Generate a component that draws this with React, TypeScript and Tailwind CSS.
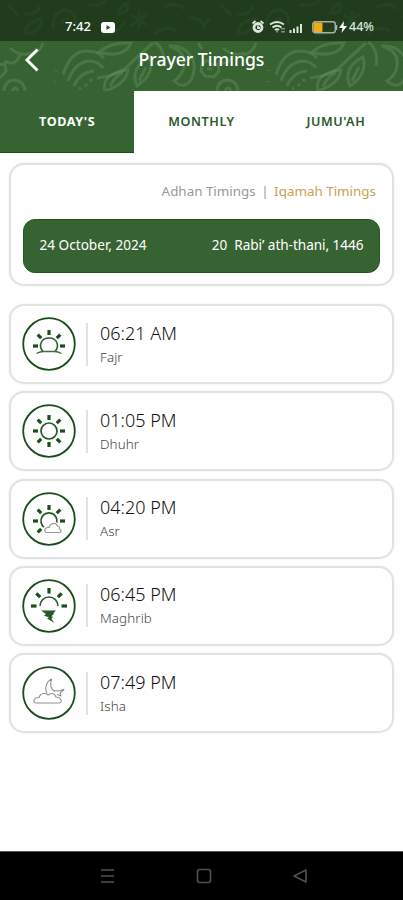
import type { ReactNode } from 'react';

interface Prayer {
    name: string;
    time: string;
    icon: ReactNode;
}

const tabs = ["TODAY'S", 'MONTHLY', "JUMU'AH"];

// Rays are placed around (0, 0), angle 0 points up
const Rays = ({ angles, from = 11, to = 16 }: { angles: number[]; from?: number; to?: number }) => (
    <g stroke="#17501b" strokeWidth="3.2">
        {angles.map((angle) => (
            <line key={angle} x1="0" x2="0" y1={-from} y2={-to} transform={`rotate(${angle})`} />
        ))}
    </g>
);

const FajrIcon = () => (
    <>
        <g transform="translate(0 2)">
            <Rays angles={[-90, -45, 0, 45, 90]} />
        </g>
        <path d="M-6 7.5C-11 2-8-6 0-6S11 2 6 7.5" stroke="#2c5e30" strokeWidth="1.6" />
        <path d="M-12.500 9.500Q-9 7.500-5.500 7.500H5.500Q9 7.500 12.500 9.500" stroke="#456b48" strokeWidth="1.3" />
    </>
);

const DhuhrIcon = () => (
    <>
        <Rays angles={[0, 45, 90, 135, 180, 225, 270, 315]} />
        <circle r="8" stroke="#235a29" strokeWidth="1.7" />
    </>
);

const AsrIcon = () => (
    <>
        <g transform="translate(0 2)">
            <Rays angles={[-135, -90, -45, 0, 45, 90]} />
            <path d="M-5 6.200A8 8 0 1 1 7.800 1.500" stroke="#235a29" strokeWidth="1.7" />
        </g>
        <path d="M-3 13.500C-6 11-3 8 0 8.500C1 4 7 3 8.500 7C11 7 10.500 9 10.500 10C13 11 12.500 13.500 10.500 13.500Z" fill="#fff" stroke="#9a9d9a" strokeWidth="1.2" />
    </>
);

const MaghribIcon = () => (
    <>
        <Rays angles={[-90, -45, 0, 45, 90]} from={12.5} to={18} />
        <path d="M-9 0A9 9 0 0 1 9 0" stroke="#2c5e30" strokeWidth="1.6" />
        <path d="M-8 4.500H7L4 7.500H5.500L2 10.500H4L2.500 13L5.500 17L-2 12.500L0 11.500L-5 9.500L-3 8Z" fill="#235a29" />
    </>
);

const IshaIcon = () => (
    <g stroke="#8d918d" strokeWidth="1.1" strokeLinejoin="round">
        <path d="M-13 10C-17 9-15 4-10 4.500C-8-1-3 0-1 2C3-1 6 1 7 4C12 4 14 9 10.500 10Z" />
        <path d="M-2 0C-5-5-2-12 2.500-14C0.500-8 2-3 6-1.500M5-2.500L9-2L15-3.500L11 0L12 3L8 1.500" />
    </g>
);

const prayers: Prayer[] = [
    { name: 'Fajr', time: '06:21 AM', icon: <FajrIcon /> },
    { name: 'Dhuhr', time: '01:05 PM', icon: <DhuhrIcon /> },
    { name: 'Asr', time: '04:20 PM', icon: <AsrIcon /> },
    { name: 'Maghrib', time: '06:45 PM', icon: <MaghribIcon /> },
    { name: 'Isha', time: '07:49 PM', icon: <IshaIcon /> },
];

// Floral motif, repeats every 213px
const Leaves = () => (
    <svg className="absolute inset-0 h-full w-full" viewBox="0 0 403 91" fill="none" stroke="#7fa877" strokeOpacity="0.28" strokeWidth="3">
        {[-213, 0, 213].map((x) => (
            <g key={x} transform={`translate(${x} 0)`}>
                <path d="M63 75Q70 51 87 51Q98 51 104 58M68 81Q75 61 91 61Q99 62 103 68M74 86Q80 72 94 71" />
                <path d="M85 86L87 84M90 81L92 79M79 89L81 88" />
                <path d="M97 78Q118 76 128 66T153 43" />
                <path d="M99 52Q110 42 131 43Q124 59 99 52Z" />
                <path d="M128 70Q126 84 105 91Q101 73 128 70ZM110 86Q115 76 123 73" />
                <path d="M150 57Q155 74 137 86Q129 68 150 57ZM139 81L146 67" />
                <path d="M155 42Q166 50 163 66" />
                <path d="M169 46Q186 51 184 66Q183 75 174 81Q184 90 191 80Q198 65 190 55Q183 45 169 46Z" />
                <path d="M4 91Q5 80 15 80Q24 81 25 91M12 91Q15 85 18 91" />
                <path d="M202 65L207 60L212 65L218 64L219 71L214 77L205 76L201 71ZM207 69H212" />
                <path d="M56 70V71M55 81V82M198 43L202 49" />
                <path d="M10 48Q20 57 32 53M20 55Q15 67 5 61M30 55Q40 53 43 43" />
                <g strokeOpacity="0.2">
                    <path d="M25 34Q25 22 42 19Q42 32 25 34ZM24 14Q36 16 40 6M8 5L18 15" />
                    <path d="M53 28Q53 10 66 10Q78 12 75 25M62 24Q62 17 69 20" />
                    <path d="M139 11V28M131 15L147 25M147 14L131 26" />
                    <path d="M87 5Q101 7 106 0M102 35Q118 34 125 22M119 14Q119 5 127 4Q130 12 119 14" />
                    <path d="M163 8Q176 0 184 9M155 34Q165 24 177 31M189 17Q203 18 204 30M204 25L210 18" />
                </g>
            </g>
        ))}
    </svg>
);

const StatusBar = () => (
    <div className="relative flex h-[41px] items-center bg-[#10230f]/60 pt-[13px] pr-[27px] pl-[65px] text-[13px] text-white">
        <span className="w-[28px] font-medium">7:42</span>
        <svg className="ml-[8px]" width="14" height="11" viewBox="0 0 14 11">
            <rect width="14" height="11" rx="3" fill="#fff" />
            <path d="M5.500 3L9.500 5.500L5.500 8Z" fill="#315030" />
        </svg>
        <svg className="ml-auto" width="52" height="16" viewBox="0 0 52 16" fill="none" stroke="#dce5dc">
            <circle cx="7" cy="8.500" r="4" strokeWidth="2.8" />
            <path d="M1.500 4.500L4.500 2M9.500 2L12.500 4.500M7 6.500V9H9" strokeWidth="1.8" />
            <path d="M19 5.500Q26 0.500 33 5.500M21.500 8.500Q26 5 30.500 8.500M24 11Q26 9.500 28 11" strokeWidth="1.8" />
            <path d="M26 12V13.500M31 9V10.500M33 9V10.500M31 12V13.500M33 12V13.500" />
            <path d="M39.500 11V14M43 9.500V14M46.500 7.500V14M50 5V14" strokeWidth="2" />
        </svg>
        <svg className="ml-[9px]" width="26" height="13" viewBox="0 0 26 13">
            <rect x="0.800" y="0.800" width="22.500" height="11" rx="2.500" fill="none" stroke="#a7b2a5" strokeWidth="1.4" />
            <rect x="1.500" y="1.500" width="9" height="9.500" rx="1" fill="#efaa1e" />
            <path d="M24.500 4V9" stroke="#a7b2a5" strokeWidth="1.5" />
        </svg>
        <svg className="ml-[1px]" width="8" height="12" viewBox="0 0 8 12">
            <path d="M5 0L0 7H3.500L2.500 12L8 5H4.500Z" fill="#fff" />
        </svg>
        <span className="ml-[2px] w-[27px] text-[12.5px] font-medium text-[#dce5dc]">44%</span>
    </div>
);

const PrayerCard = ({ name, time, icon }: Prayer) => (
    <div className="flex h-[80px] items-center rounded-[15px] border-2 border-[#e2e2e2] pl-[11px] shadow-[0_0_2px_#e8e8e8]">
        <svg width="54" height="54" viewBox="-27 -27 54 54" fill="none">
            <circle r="25.800" stroke="#1b4c1d" strokeWidth="1.8" />
            {icon}
        </svg>
        <div className="ml-[10px] h-[43px] w-[2px] bg-[#e2e2e2]" />
        <div className="ml-[12px]">
            <div className="text-[18px] leading-[24px] font-light text-[#111]">{time}</div>
            <div className="pt-[1px] text-[13.4px] leading-[22px] font-light tracking-[0.1px] text-[#444]">{name}</div>
        </div>
    </div>
);

const App = () => {
    return (
        <div className="flex h-[900px] w-[403px] flex-col overflow-hidden bg-white font-['Noto_Sans',sans-serif]">
            <header className="relative h-[91px] shrink-0 overflow-hidden bg-[#376332]">
                <Leaves />
                <StatusBar />
                <div className="relative flex h-[37px] items-center justify-center text-white">
                    <svg className="absolute top-[7px] left-[24px]" width="16" height="24" viewBox="0 0 16 24" fill="none">
                        <path d="M13.500 1.500L3 12L13.500 22.500" stroke="currentColor" strokeWidth="2.9" />
                    </svg>
                    <h1 className="text-[17.6px] font-medium">Prayer Timings</h1>
                </div>
            </header>

            <nav className="grid h-[62px] shrink-0 grid-cols-3">
                {tabs.map((tab, i) => (
                    <button
                        key={tab}
                        className={`border-b pt-[2px] text-[12.6px] tracking-[0.6px] ${
                            i === 0
                                ? 'border-[#184f15] bg-[#376332] font-bold text-white'
                                : 'border-transparent font-semibold text-[#285b28]'
                        }`}
                    >
                        {tab}
                    </button>
                ))}
            </nav>

            <main className="flex-1 px-[9px] pt-[10px]">
                <section className="h-[123px] rounded-[15px] border-2 border-[#e2e2e2] px-[12px] pt-[16px] shadow-[0_0_2px_#e8e8e8]">
                    <div className="flex h-[20px] items-center justify-end gap-[5.5px] pr-[4px] text-[13.4px] text-[#999]">
                        <span>Adhan Timings</span>
                        <span>|</span>
                        <span className="text-[#cba153]">Iqamah Timings</span>
                    </div>
                    <div className="mt-[18px] flex h-[54px] items-center justify-between rounded-[12px] border border-[#245720] bg-[#376332] px-[15.5px] pb-[1px] text-[13.6px] text-white">
                        <span>24 October, 2024</span>
                        <span className="whitespace-pre tracking-[-0.05px]">20  Rabi’ ath-thani, 1446</span>
                    </div>
                </section>

                <div className="mt-[18px] flex flex-col gap-[7.3px]">
                    {prayers.map((prayer) => (
                        <PrayerCard key={prayer.name} {...prayer} />
                    ))}
                </div>
            </main>

            <footer className="flex h-[49px] shrink-0 items-center justify-center border-t border-[#555] bg-black">
                <svg className="ml-[5px]" width="210" height="18" viewBox="0 0 210 18" fill="none" stroke="#505050" strokeWidth="1.6">
                    <path d="M2 3H15M2 9H15M2 15H15" />
                    <rect x="98.500" y="2.500" width="13" height="13" rx="2" />
                    <path d="M207 3V15L195 9Z" strokeLinejoin="round" />
                </svg>
            </footer>
        </div>
    );
};

export default App;
